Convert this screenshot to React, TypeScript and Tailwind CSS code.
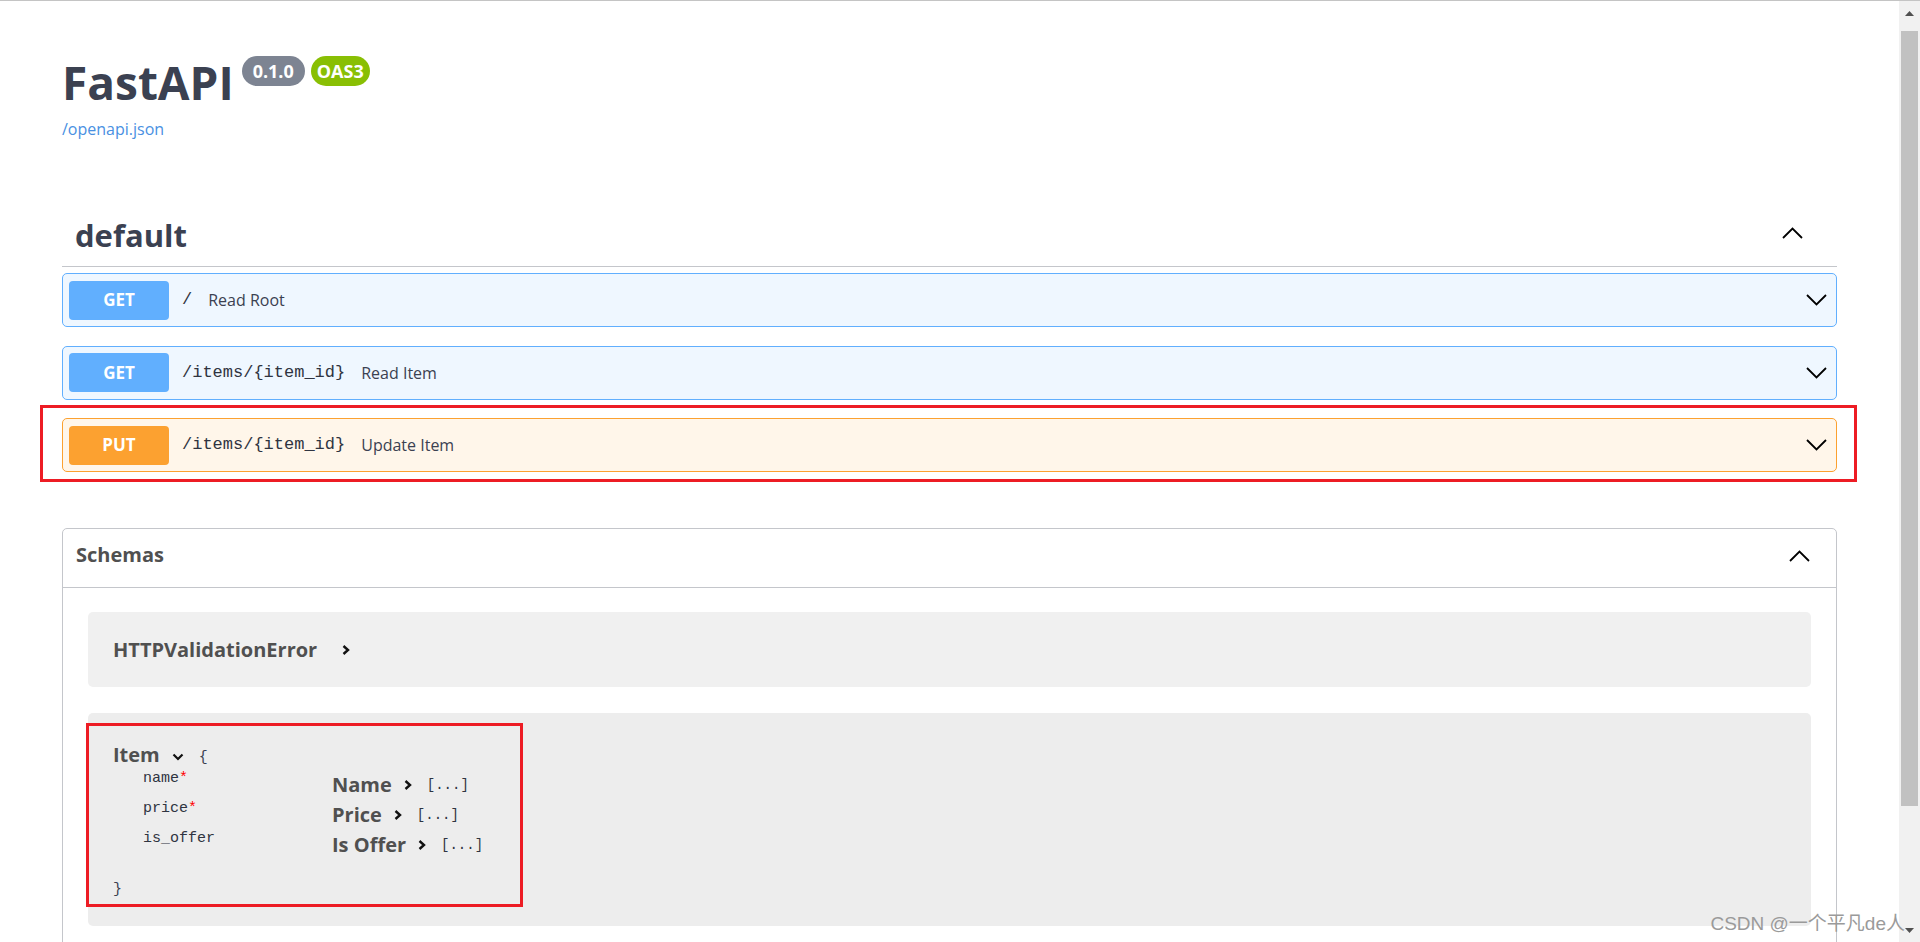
import React from 'react';

type Method = 'GET' | 'PUT';

const ops: { method: Method; path: string; summary: string }[] = [
	{ method: 'GET', path: '/', summary: 'Read Root' },
	{ method: 'GET', path: '/items/{item_id}', summary: 'Read Item' },
	{ method: 'PUT', path: '/items/{item_id}', summary: 'Update Item' },
];

const fields = [
	{ name: 'name', required: true, title: 'Name' },
	{ name: 'price', required: true, title: 'Price' },
	{ name: 'is_offer', required: false, title: 'Is Offer' },
];

function ArrowUp() {
	return (
		<svg width="21" height="12" viewBox="0 0 21 12" className="shrink-0">
			<polyline points="1,11 10.5,1.5 20,11" fill="none" stroke="#000" strokeWidth="1.8" />
		</svg>
	);
}

function ArrowDown() {
	return (
		<svg width="21" height="12" viewBox="0 0 21 12" className="shrink-0">
			<polyline points="1,1 10.5,10.5 20,1" fill="none" stroke="#000" strokeWidth="1.8" />
		</svg>
	);
}

function SmallRight() {
	return (
		<svg width="8" height="10" viewBox="0 0 8 10" className="shrink-0">
			<polyline points="1.5,1 6,5 1.5,9" fill="none" stroke="#111" strokeWidth="2.4" />
		</svg>
	);
}

function SmallDown() {
	return (
		<svg width="12" height="8" viewBox="0 0 12 8" className="shrink-0">
			<polyline points="1.5,1.5 6,6 10.5,1.5" fill="none" stroke="#111" strokeWidth="2.2" />
		</svg>
	);
}

function OpBlock({ method, path, summary }: { method: Method; path: string; summary: string }) {
	const isGet = method === 'GET';
	return (
		<div className={`flex h-[54px] items-center rounded-[5px] border pl-[6px] pr-[9px] ${isGet ? 'border-[#61affe] bg-[#eff7ff]' : 'border-[#fca130] bg-[#fff6ea]'}`}>
			<div className={`flex h-[39px] w-[100px] shrink-0 items-center justify-center rounded-[4px] text-[17px] font-bold text-white ${isGet ? 'bg-[#61affe]' : 'bg-[#fca130]'}`}>
				{method}
			</div>
			<span className="ml-[13px] font-['Liberation_Mono',monospace] text-[17px] text-[#2f3441]">{path}</span>
			<span className="ml-[16px] text-[16px] text-[#3b4151]">{summary}</span>
			<div className="ml-auto">
				<ArrowDown />
			</div>
		</div>
	);
}

export default function App() {
	return (
		<div className="relative flex h-[942px] w-full overflow-hidden border-t border-[#c4c4c4] bg-white font-['Open_Sans',sans-serif] text-[#3b4151]">
			<div className="h-full min-w-0 flex-1 overflow-hidden">
				<div className="px-[62px]">
					{/* info */}
					<div className="flex items-start pt-[54px]">
						<h1 className="text-[46px] font-bold leading-[54px] text-[#3b4151]">FastAPI</h1>
						<span className="ml-[8px] mt-[1px] flex h-[30px] w-[63px] items-center justify-center rounded-full bg-[#7d8492] text-[18px] font-bold text-white">0.1.0</span>
						<span className="ml-[6px] mt-[1px] flex h-[30px] w-[59px] items-center justify-center rounded-full bg-[#89bf04] text-[18px] font-bold text-white">OAS3</span>
					</div>
					<div className="mt-[10px] text-[16px] leading-[20px] text-[#4990e2]">/openapi.json</div>

					{/* default tag */}
					<div className="mt-[76px] flex items-start justify-between border-b border-[#c4c6cb] pb-[11px] pl-[13px] pr-[34px]">
						<h3 className="text-[31px] font-bold leading-[40px] text-[#3b4151]">default</h3>
						<div className="mt-[12px]">
							<ArrowUp />
						</div>
					</div>

					<div className="mt-[6px] flex flex-col gap-[18.5px]">
						{ops.map((op, i) =>
							op.method === 'PUT' ? (
								<div key={i} className="relative">
									<OpBlock {...op} />
									<div className="pointer-events-none absolute -bottom-[10px] -left-[22px] -right-[20px] -top-[13px] border-[3px] border-[#ed1c24]" />
								</div>
							) : (
								<OpBlock key={i} {...op} />
							)
						)}
					</div>

					{/* schemas */}
					<section className="mt-[56px] rounded-[5px] border border-[#c4c6cb]">
						<div className="flex h-[59px] items-start justify-between border-b border-[#c4c6cb] pl-[13px] pr-[26px] pt-[12px]">
							<h4 className="text-[20px] font-bold leading-[28px] text-[#505050]">Schemas</h4>
							<div className="mt-[9px]">
								<ArrowUp />
							</div>
						</div>
						<div className="flex flex-col gap-[26px] px-[25px] pb-[60px] pt-[24px]">
							<div className="flex h-[75px] items-center rounded-[5px] bg-[#f0f0f0] pl-[25px]">
								<span className="text-[20px] font-bold leading-[28px] text-[#505050]">HTTPValidationError</span>
								<div className="ml-[25px]">
									<SmallRight />
								</div>
							</div>

							<div className="relative rounded-[5px] bg-[#ededed] pb-[24px] pl-[25px] pt-[30px]">
								<div className="flex h-[24px] items-center">
									<span className="text-[20px] font-bold leading-[24px] text-[#505050]">Item</span>
									<div className="ml-[12px] mt-[4px]">
										<SmallDown />
									</div>
									<span className="ml-[15px] mt-[5px] font-['Liberation_Mono',monospace] text-[15px] leading-[24px]">{'{'}</span>
								</div>
								<div className="flex pl-[30px]">
									<div className="w-[189px] font-['Liberation_Mono',monospace] text-[15px] text-[#2f3441]">
										{fields.map((f) => (
											<div key={f.name} className="h-[30px] leading-[24px]">
												{f.name}
												{f.required && <span className="text-[#ff0000]">*</span>}
											</div>
										))}
									</div>
									<div className="mt-[3px]">
										{fields.map((f) => (
											<div key={f.name} className="flex h-[30px] items-center">
												<span className="text-[20px] font-bold leading-[30px] text-[#505050]">{f.title}</span>
												<div className="ml-[12px]">
													<SmallRight />
												</div>
												<span className="ml-[15px] font-['Liberation_Mono',monospace] text-[14px] text-[#2f3441]">[...]</span>
											</div>
										))}
									</div>
								</div>
								<div className="mt-[18px] font-['Liberation_Mono',monospace] text-[15px] leading-[24px]">{'}'}</div>
								<div className="pointer-events-none absolute left-[-2px] top-[10px] h-[184px] w-[437px] border-[3px] border-[#ed1c24]" />
							</div>
						</div>
					</section>
				</div>
			</div>

			{/* scrollbar */}
			<div className="flex h-full w-[21px] shrink-0 flex-col items-center bg-[#f1f1f1]">
				<div className="flex h-[30px] items-start pt-[10px]">
					<svg width="9" height="5" viewBox="0 0 9 5">
						<polygon points="0,5 4.5,0 9,5" fill="#505050" />
					</svg>
				</div>
				<div className="h-[775px] w-[17px] bg-[#c1c1c1]" />
				<div className="flex flex-1 items-end pb-[9px]">
					<svg width="9" height="5" viewBox="0 0 9 5">
						<polygon points="0,0 9,0 4.5,5" fill="#505050" />
					</svg>
				</div>
			</div>

			<div className="pointer-events-none absolute bottom-[9px] right-[15px] font-['Liberation_Sans','Noto_Sans_CJK_SC',sans-serif] text-[19px] leading-none text-[#9a9a9a]">
				CSDN @一个平凡de人
			</div>
		</div>
	);
}
